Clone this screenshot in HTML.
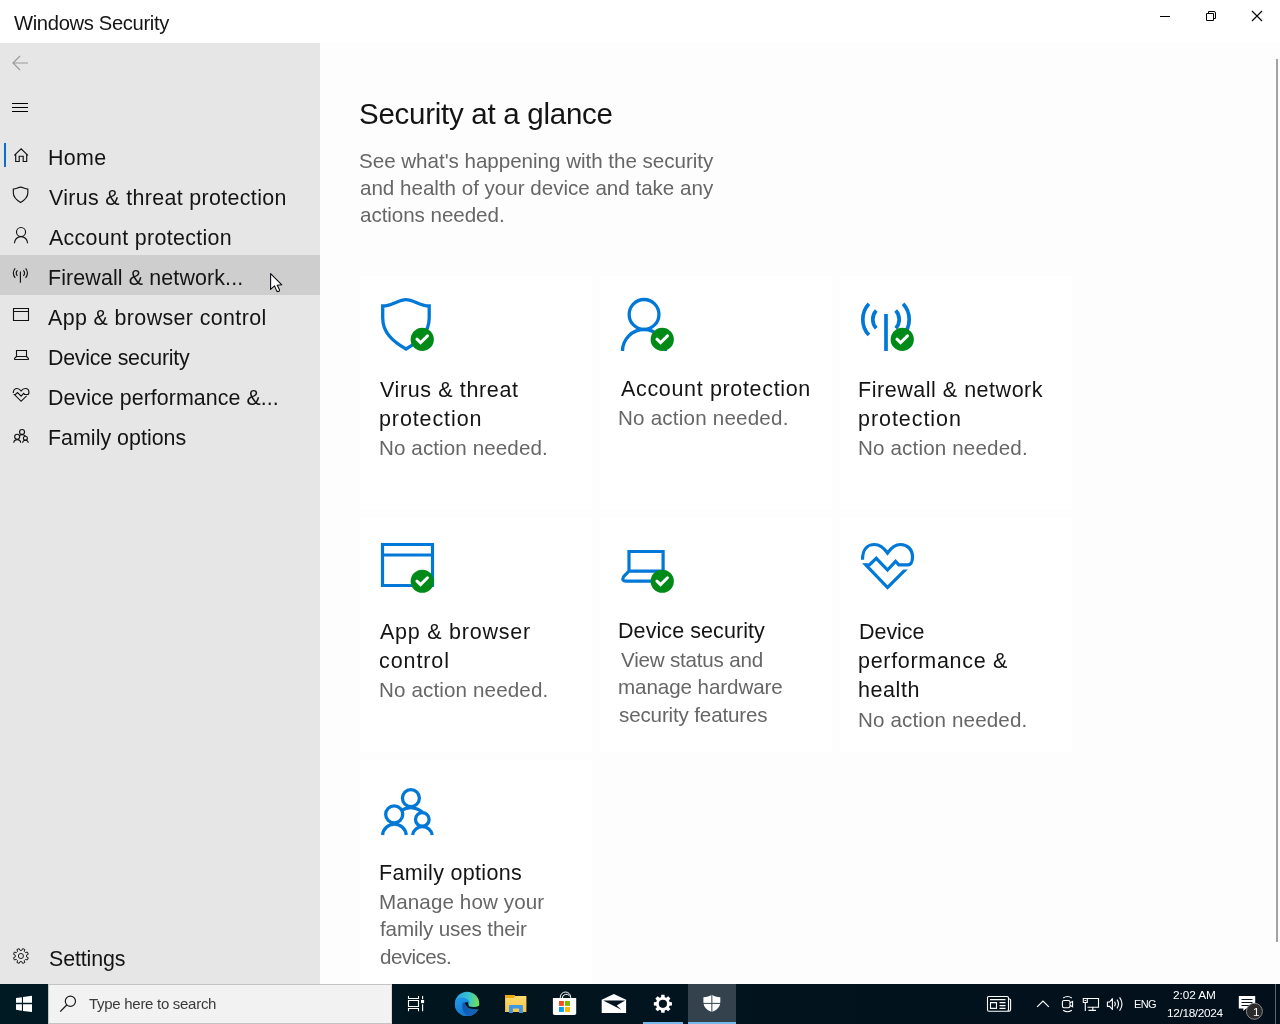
<!DOCTYPE html>
<html lang="en"><head><meta charset="utf-8"><title>Windows Security</title>
<style>
html,body{margin:0;padding:0}
body{width:1280px;height:1024px;overflow:hidden;position:relative;background:#fff;font-family:"Liberation Sans",sans-serif}
.a{position:absolute}
.grp{position:absolute;left:0;top:0;width:0;height:0;display:block}
.t{position:absolute;white-space:nowrap;display:block;will-change:transform}
svg{position:absolute;overflow:visible}
#side{left:0;top:43px;width:320px;height:941px;background:#e6e6e6}
#main{left:320px;top:43px;width:960px;height:941px;background:#fdfdfd}
.card{background:#fff;width:232px;height:234px}
#hover{left:0;top:255px;width:320px;height:40px;background:#cecece}
#sel{left:4px;top:143px;width:2px;height:24px;background:#0a6cd6}
#tb{left:0;top:984px;width:1280px;height:40px;background:#02131f;background:linear-gradient(90deg,#001a24 0,#01151f 35%,#03101c 100%)}
#search{left:48px;top:984px;width:344px;height:40px;background:#f2f2f2;box-sizing:border-box;border:1px solid #c4c4c4;border-right-color:#d6d6d6}
#active{left:688px;top:984px;width:48px;height:40px;background:#33424d}
.ul{height:2px;top:1022px;background:#76b9ed}
#scroll{left:1276px;top:59px;width:2px;height:883px;background:#a3a3a3}
</style></head>
<body>
<div class="a" id="side"></div>
<div class="a" id="main"></div>
<div class="a" id="hover"></div>
<div class="a" id="sel"></div>
<div class="a card" style="left:360px;top:276px;height:234px"></div>
<div class="a card" style="left:600px;top:276px;height:234px"></div>
<div class="a card" style="left:840px;top:276px;height:234px"></div>
<div class="a card" style="left:360px;top:518px;height:234px"></div>
<div class="a card" style="left:600px;top:518px;height:234px"></div>
<div class="a card" style="left:840px;top:518px;height:234px"></div>
<div class="a card" style="left:360px;top:760px;height:224px"></div>
<div class="a" id="scroll"></div>
<div class="a" id="tb"></div>
<div class="a" id="search"></div>
<div class="a" id="active"></div>
<div class="a ul" style="left:643px;width:40px"></div>
<div class="a ul" style="left:688px;width:48px"></div>
<svg width="1280" height="1024" viewBox="0 0 1280 1024" style="left:0;top:0"><g transform="translate(381,298) scale(1)" fill="none" color="#0078d7" stroke="#0078d7" stroke-width="3.300"><path d="M1.7,8 C12,8 17,1.6 25,1.6 C33,1.6 38,8 48.2,8 V20 C48.2,34 39,43 25,51 C11,43 1.7,34 1.7,20 Z"/></g><circle cx="422.25" cy="339.4" r="11.6" fill="#008a17"/><path d="M416.95,339.20 L420.55,342.70 L427.45,335.90" fill="none" stroke="#fff" stroke-width="3" stroke-linejoin="miter" stroke-linecap="round"/><g transform="translate(621,298) scale(1)" fill="none" color="#0078d7" stroke="#0078d7" stroke-width="3.300"><circle cx="23.05" cy="16.4" r="14.9"/><path d="M1.5,53 A21.5,21.5 0 0 1 44.5,53"/></g><circle cx="662.25" cy="339.4" r="11.6" fill="#008a17"/><path d="M656.95,339.20 L660.55,342.70 L667.45,335.90" fill="none" stroke="#fff" stroke-width="3" stroke-linejoin="miter" stroke-linecap="round"/><g transform="translate(861,302) scale(1)" fill="none" color="#0078d7" stroke="#0078d7" stroke-width="3.700"><path d="M15.27,8.48 A13.2,13.2 0 0 0 15.27,26.32"/><path d="M34.73,8.48 A13.2,13.2 0 0 1 34.73,26.32"/><path d="M7.90,1.73 A23.2,23.2 0 0 0 7.90,33.07"/><path d="M42.10,1.73 A23.2,23.2 0 0 1 42.10,33.07"/><path d="M25,11.999999999999998 V49"/></g><circle cx="902.25" cy="339.4" r="11.6" fill="#008a17"/><path d="M896.95,339.20 L900.55,342.70 L907.45,335.90" fill="none" stroke="#fff" stroke-width="3" stroke-linejoin="miter" stroke-linecap="round"/><g transform="translate(381,543) scale(1)" fill="none" color="#0078d7" stroke="#0078d7" stroke-width="3.200"><path d="M1.5,1.5 H51.5 V42.5 H1.5 Z M1.5,12 H51.5"/></g><circle cx="422.25" cy="581.25" r="11.6" fill="#008a17"/><path d="M416.95,581.05 L420.55,584.55 L427.45,577.75" fill="none" stroke="#fff" stroke-width="3" stroke-linejoin="miter" stroke-linecap="round"/><g transform="translate(621,550) scale(1)" fill="none" color="#0078d7" stroke="#0078d7" stroke-width="3.200"><path d="M8,21.2 V1.5 H42.1 V21.2 M8,21.2 H42.1 M8,21.2 L2.6,26.6 Q0.3,31.2 5,31.2 H45.1 Q49.8,31.2 47.5,26.6 L42.1,21.2"/></g><circle cx="662.25" cy="581.25" r="11.6" fill="#008a17"/><path d="M656.95,581.05 L660.55,584.55 L667.45,577.75" fill="none" stroke="#fff" stroke-width="3" stroke-linejoin="miter" stroke-linecap="round"/><g transform="translate(861,543) scale(1)" fill="none" color="#0078d7" stroke="#0078d7" stroke-width="3.200"><path d="M1.5,16.8 C1.5,6 7,1.5 13.5,1.5 C19,1.5 23,5 26.5,10 C30,5 34,1.5 39.5,1.5 C46,1.5 51.5,6 51.5,14 C51.5,18 50,21.8 47,21.8 L37.75,21.8 L34.6,18.3 L26.5,27 L15.25,15.3 L8.4,21.8 L4.5,21.8" stroke-linejoin="miter"/><path d="M1,20.2 L5.5,20.2 L26.5,42.2 L42.3,26.4 L46.8,26.4 L26.5,46.7 Z" fill="currentColor" stroke="none"/></g><g transform="translate(381,788) scale(1)" fill="none" color="#0078d7" stroke="#0078d7" stroke-width="3.300"><circle cx="29.9" cy="10.1" r="8.5"/><path d="M20.3,22.6 A17.5,17.5 0 0 1 41.6,24.2"/><circle cx="13.2" cy="26.4" r="8.5"/><path d="M1.54,47 A11.9,11.9 0 0 1 25.26,47"/><circle cx="41.3" cy="31.4" r="6.8"/><path d="M31.6,47 A9.9,9.9 0 0 1 51.2,47"/></g><path d="M14.3,155.4 L21.1,148.8 L27.9,155.4 M15.7,154.3 V161.5 H19.2 V156.2 H23.2 V161.5 H26.7 V154.3" fill="none" stroke="#111" stroke-width="1.15"/><g transform="translate(12.8,186.6) scale(0.312)" fill="none" color="#111" stroke="#111" stroke-width="3.686"><path d="M1.7,8 C12,8 17,1.6 25,1.6 C33,1.6 38,8 48.2,8 V20 C48.2,34 39,43 25,51 C11,43 1.7,34 1.7,20 Z"/></g><g transform="translate(14,227) scale(0.305)" fill="none" color="#111" stroke="#111" stroke-width="3.770"><circle cx="23.05" cy="16.4" r="14.9"/><path d="M1.5,53 A21.5,21.5 0 0 1 44.5,53"/></g><g transform="translate(12.8,267.8) scale(0.304)" fill="none" color="#111" stroke="#111" stroke-width="3.783"><path d="M15.27,8.48 A13.2,13.2 0 0 0 15.27,26.32"/><path d="M34.73,8.48 A13.2,13.2 0 0 1 34.73,26.32"/><path d="M7.90,1.73 A23.2,23.2 0 0 0 7.90,33.07"/><path d="M42.10,1.73 A23.2,23.2 0 0 1 42.10,33.07"/><path d="M25,11.999999999999998 V49"/></g><path d="M13.5,308.5 H28.5 V320.5 H13.5 Z M13.5,311.5 H28.5" fill="none" stroke="#111" stroke-width="1.1"/><path d="M16.5,356.5 V350.5 H26.5 V356.5 M16.5,356.5 H26.5 M16.5,356.5 L14.6,358.4 Q14,359.5 15.4,359.5 H27.6 Q29,359.5 28.4,358.4 L26.5,356.5" fill="none" stroke="#111" stroke-width="1.1"/><g transform="translate(12.8,388) scale(0.313,0.298)" fill="none" color="#111" stroke="#111" stroke-width="3.833"><path d="M1.5,16.8 C1.5,6 7,1.5 13.5,1.5 C19,1.5 23,5 26.5,10 C30,5 34,1.5 39.5,1.5 C46,1.5 51.5,6 51.5,14 C51.5,18 50,21.8 47,21.8 L37.75,21.8 L34.6,18.3 L26.5,27 L15.25,15.3 L8.4,21.8 L4.5,21.8" stroke-linejoin="miter"/><path d="M1,20.2 L5.5,20.2 L26.5,42.2 L42.3,26.4 L46.8,26.4 L26.5,46.7 Z" fill="currentColor" stroke="none"/></g><g transform="translate(13.3,429) scale(0.293)" fill="none" color="#111" stroke="#111" stroke-width="3.925"><circle cx="29.9" cy="10.1" r="8.5"/><path d="M20.3,22.6 A17.5,17.5 0 0 1 41.6,24.2"/><circle cx="13.2" cy="26.4" r="8.5"/><path d="M1.54,47 A11.9,11.9 0 0 1 25.26,47"/><circle cx="41.3" cy="31.4" r="6.8"/><path d="M31.6,47 A9.9,9.9 0 0 1 51.2,47"/></g><path d="M21.79,950.37 L22.67,948.61 L24.87,949.52 L24.25,951.39 L25.51,952.65 L27.38,952.03 L28.29,954.23 L26.53,955.11 L26.53,956.89 L28.29,957.77 L27.38,959.97 L25.51,959.35 L24.25,960.61 L24.87,962.48 L22.67,963.39 L21.79,961.63 L20.01,961.63 L19.13,963.39 L16.93,962.48 L17.55,960.61 L16.29,959.35 L14.42,959.97 L13.51,957.77 L15.27,956.89 L15.27,955.11 L13.51,954.23 L14.42,952.03 L16.29,952.65 L17.55,951.39 L16.93,949.52 L19.13,948.61 L20.01,950.37 Z" fill="none" stroke="#111" stroke-width="0.95" stroke-linejoin="round"/><circle cx="20.9" cy="956" r="2.55" fill="none" stroke="#111" stroke-width="0.95"/><path d="M28,63 H13 M20,56 L13,63 L20,70" fill="none" stroke="#9a9a9a" stroke-width="1.2"/><path d="M12,103.5 H28 M12,107.5 H28 M12,111.5 H28" stroke="#000" stroke-width="1"/><path d="M1160,16.5 H1170" stroke="#000" stroke-width="1"/><path d="M1206.5,13.5 H1213.5 V20.5 H1206.5 Z M1208.5,13.5 V11.5 H1214 Q1215.5,11.5 1215.5,13 V18.5 H1213.5" fill="none" stroke="#000" stroke-width="1"/><path d="M1252,11 L1262,21 M1262,11 L1252,21" stroke="#000" stroke-width="1.1"/><path d="M270.6,273.6 V289.4 L274.5,285.9 L276.7,290.9 Q277.6,292 278.9,291.3 Q279.9,290.6 279.4,289.5 L277.2,285.2 L281.8,284.8 Z" fill="#fff" stroke="#0a0a14" stroke-width="1.1" stroke-linejoin="round"/><path d="M16,998 L21.9,997.15 V1002.8 H16 Z M23,997 L32,995.7 V1002.8 H23 Z M16,1004.2 H21.9 V1010.7 L16,1009.85 Z M23,1004.2 H32 V1012.1 L23,1010.9 Z" fill="#fff"/><circle cx="70.4" cy="1001.3" r="5.1" fill="none" stroke="#1c1c1c" stroke-width="1.2"/><path d="M66.7,1005 L60.2,1011.6" stroke="#1c1c1c" stroke-width="1.3"/><path d="M408.5,1000.5 H418.5 V1006.5 H408.5 Z M408.5,996 V998.5 H418.5 V996 M408.5,1011.2 V1008.5 H418.5 V1011.2 M422.6,996 V999.2 M422.6,1004.2 V1011.2" fill="none" stroke="#fff" stroke-width="1.1"/><rect x="421" y="1000" width="3.1" height="3.1" fill="#fff"/><defs>
<linearGradient id="eg1" x1="0.1" y1="0.3" x2="1" y2="0.45"><stop offset="0" stop-color="#2aa9e6"/><stop offset="0.5" stop-color="#38c6c8"/><stop offset="1" stop-color="#74e150"/></linearGradient>
<linearGradient id="eg2" x1="0" y1="0" x2="0.6" y2="1"><stop offset="0" stop-color="#1f9be8"/><stop offset="1" stop-color="#1272cf"/></linearGradient>
<linearGradient id="eg3" x1="0" y1="0" x2="1" y2="1"><stop offset="0" stop-color="#0f57ad"/><stop offset="1" stop-color="#1566bf"/></linearGradient>
<linearGradient id="fg" x1="0" y1="0" x2="0" y2="1"><stop offset="0" stop-color="#ffdb6e"/><stop offset="1" stop-color="#f7c64a"/></linearGradient>
</defs><circle cx="467.1" cy="1003.9" r="12.2" fill="url(#eg1)"/><path d="M455,1003 C455.5,1000 457.5,997.8 460.5,997.6 C464.5,997.4 468.5,998.8 470,1002.8 C468,1001.6 465.5,1002.4 465.2,1004.8 C465,1009 470,1012.2 477.6,1009.8 C475,1013.6 471.5,1016.1 467.1,1016.1 C460.4,1016.1 454.9,1010.6 454.9,1003.9 Z" fill="url(#eg2)"/><path d="M462.6,1003.5 C461.5,1008.5 463.5,1014.5 469,1015.9 C473,1015.5 476.5,1013 478,1009.2 L471,1008.8 C467.1,1008.2 464.75,1005.1 465.1,1002.4 C464,1002.2 463,1002.6 462.6,1003.5 Z" fill="url(#eg3)"/><path d="M465.1,1002.4 C464.75,1005.1 467.1,1008.2 471,1008.8 L478.4,1009.5 L479.6,1007.6 L479.4,1005.4 C476,1007.4 472,1007.6 469,1006.3 C468.3,1004.7 469,1002.75 467.5,1002 Z" fill="#04182a"/><path d="M505.1,995.4 Q505.1,994.9 505.6,994.9 H514 L515.3,996.1 H526 Q526.4,996.1 526.4,996.5 V1012 H505.1 Z" fill="url(#fg)"/><path d="M505.1,995.4 Q505.1,994.9 505.6,994.9 H514 L515.2,996.1 L513.6,998 H505.1 Z" fill="#e9a90f"/><path d="M509,1005.9 Q509,1004.9 510,1004.9 H521.9 Q522.9,1004.9 522.9,1005.9 V1012.9 H519 V1008.4 H512.9 V1012.9 H509 Z" fill="#3f98e3"/><path d="M552.9,998 H576.2 V1013.3 Q576.2,1015.1 574.4,1015.1 H554.7 Q552.9,1015.1 552.9,1013.3 Z" fill="#fff"/><path d="M560.3,998 V997.2 A5.2,5.2 0 0 1 570.7,997.2 V998 M562.3,998 A4,4 0 0 1 569.6,996" fill="none" stroke="#fff" stroke-width="1"/><rect x="559" y="1001" width="4.9" height="4.9" fill="#f25022"/><rect x="565" y="1001" width="5" height="4.9" fill="#7fba00"/><rect x="559" y="1007" width="4.9" height="4.9" fill="#00a4ef"/><rect x="565" y="1007" width="5" height="4.9" fill="#ffb900"/><path d="M601.7,999.8 L613.9,994 L626.1,999.8 V1012.9 H601.7 Z" fill="#fff"/><path d="M603.2,1000.5 L625.2,1000.5 L616.7,1005.4 L621.4,1009.7 Z" fill="#03131f"/><path d="M661.05,997.15 L661.25,994.75 L664.55,994.75 L664.75,997.15 L666.30,997.79 L668.13,996.23 L670.47,998.57 L668.91,1000.40 L669.55,1001.95 L671.95,1002.15 L671.95,1005.45 L669.55,1005.65 L668.91,1007.20 L670.47,1009.03 L668.13,1011.37 L666.30,1009.81 L664.75,1010.45 L664.55,1012.85 L661.25,1012.85 L661.05,1010.45 L659.50,1009.81 L657.67,1011.37 L655.33,1009.03 L656.89,1007.20 L656.25,1005.65 L653.85,1005.45 L653.85,1002.15 L656.25,1001.95 L656.89,1000.40 L655.33,998.57 L657.67,996.23 L659.50,997.79 Z M667.00,1003.80 A4.1,4.1 0 1 0 658.80,1003.80 A4.1,4.1 0 1 0 667.00,1003.80 Z" fill="#fff" fill-rule="evenodd"/><path d="M703.4,997.2 C707,997.2 709.5,996.2 711.85,994.8 C714.2,996.2 716.7,997.2 720.3,997.2 V1002 C720.3,1007 716.5,1010.3 711.85,1012.1 C707.2,1010.3 703.4,1007 703.4,1002 Z" fill="#fff"/><path d="M711.85,994 V1013 M703,1003.4 H721" stroke="#33424d" stroke-width="1"/><path d="M988.5,996.5 H1007 Q1008.5,996.5 1008.5,998 V1009.7 Q1008.5,1011.2 1007,1011.2 H989 Q987.5,1011.2 987.5,1009.7 V997.5 Q987.5,996.5 988.5,996.5 Z M1008.5,999 H1009.6 Q1010.6,999 1010.6,1000 V1009.5 Q1010.6,1011.2 1009,1011.2 H1007 M990,999.6 H1005.5 M999.5,1002.6 H1005.5 M999.5,1005.6 H1005.5 M999.5,1008.4 H1005.5 M990.5,1002.6 H996.5 V1008.4 H990.5 Z" fill="none" stroke="#fff" stroke-width="1.1"/><path d="M1037.2,1006.8 L1043,1001 L1048.8,1006.8" fill="none" stroke="#fff" stroke-width="1.2"/><path d="M1064,1000.5 H1068.3 Q1070,1000.5 1070,1002.2 V1006 Q1070,1007.7 1068.3,1007.7 H1064 Q1062.4,1007.7 1062.4,1006 V1002.2 Q1062.4,1000.5 1064,1000.5 Z M1070,1003 L1072.6,1001.4 V1006.8 L1070,1005.2 M1063.2,998 Q1067.5,995 1071.8,998 M1063.2,1010.2 Q1067.5,1013.2 1071.8,1010.2" fill="none" stroke="#fff" stroke-width="1.1"/><path d="M1087.5,998.5 H1098.5 V1007.3 H1087.5 M1092.8,1007.3 V1010.4 M1088.5,1010.4 H1096 M1083.3,998.5 H1087.3 V1002.5 H1083.3 Z M1085.3,1002.5 V1011 M1084.5,1000.5 H1086.2" fill="none" stroke="#fff" stroke-width="1.1"/><path d="M1107.4,1002 H1109.6 L1112.4,998.6 V1009.4 L1109.6,1006.4 H1107.4 Z" fill="none" stroke="#fff" stroke-width="1.1" stroke-linejoin="round"/><path d="M1114.6,1001.6 Q1116.2,1004 1114.6,1006.4 M1117,999.6 Q1120,1004 1117,1008.4 M1119.6,997.4 Q1124.4,1004 1119.6,1010.8" fill="none" stroke="#fff" stroke-width="1.1"/><path d="M1238.8,996 H1255.2 V1008.4 H1246 L1243.4,1011 V1008.4 H1238.8 Z" fill="#fff"/><path d="M1241.5,999.5 H1252.5 M1241.5,1002.5 H1252.5 M1241.5,1005.5 H1249" stroke="#03131f" stroke-width="1"/><circle cx="1254.4" cy="1011.3" r="8" fill="#2b2b2b" stroke="#8a8a8a" stroke-width="1"/><path d="M1275.5,984 V1024" stroke="#5c6770" stroke-width="1"/></svg>
<header class="grp">
<span class="t" style="left:14.40px;top:13px;font-size:20.2px;line-height:20.2px;letter-spacing:-0.342px;color:#141414">Windows Security</span>
</header>
<nav class="grp">
<span class="t" style="left:48.25px;top:148px;font-size:21.4px;line-height:21.4px;letter-spacing:0.362px;color:#141414">Home</span>
<span class="t" style="left:49.00px;top:188px;font-size:21.4px;line-height:21.4px;letter-spacing:0.346px;color:#141414">Virus &amp; threat protection</span>
<span class="t" style="left:48.75px;top:228px;font-size:21.4px;line-height:21.4px;letter-spacing:0.322px;color:#141414">Account protection</span>
<span class="t" style="left:48.00px;top:268px;font-size:21.4px;line-height:21.4px;letter-spacing:0.131px;color:#141414">Firewall &amp; network...</span>
<span class="t" style="left:48.25px;top:308px;font-size:21.4px;line-height:21.4px;letter-spacing:0.391px;color:#141414">App &amp; browser control</span>
<span class="t" style="left:48.00px;top:348px;font-size:21.4px;line-height:21.4px;letter-spacing:-0.238px;color:#141414">Device security</span>
<span class="t" style="left:48.00px;top:388px;font-size:21.4px;line-height:21.4px;letter-spacing:0.057px;color:#141414">Device performance &amp;...</span>
<span class="t" style="left:48.00px;top:428px;font-size:21.4px;line-height:21.4px;letter-spacing:0.023px;color:#141414">Family options</span>
<span class="t" style="left:48.75px;top:949px;font-size:21.4px;line-height:21.4px;letter-spacing:-0.135px;color:#141414">Settings</span>
</nav>
<main class="grp">
<span class="t" style="left:358.50px;top:99px;font-size:29.5px;line-height:29.5px;letter-spacing:-0.273px;color:#141414">Security at a glance</span>
<span class="t" style="left:359.00px;top:151px;font-size:20.6px;line-height:20.6px;letter-spacing:-0.029px;color:#666">See what&#x27;s happening with the security</span>
<span class="t" style="left:359.50px;top:178px;font-size:20.6px;line-height:20.6px;letter-spacing:-0.016px;color:#666">and health of your device and take any</span>
<span class="t" style="left:359.50px;top:205px;font-size:20.6px;line-height:20.6px;letter-spacing:-0.057px;color:#666">actions needed.</span>
<span class="t" style="left:380.00px;top:380px;font-size:21.5px;line-height:21.5px;letter-spacing:0.624px;color:#141414">Virus &amp; threat</span>
<span class="t" style="left:378.50px;top:409px;font-size:21.5px;line-height:21.5px;letter-spacing:0.893px;color:#141414">protection</span>
<span class="t" style="left:378.50px;top:438px;font-size:20.6px;line-height:20.6px;letter-spacing:0.097px;color:#666">No action needed.</span>
<span class="t" style="left:620.60px;top:379px;font-size:21.5px;line-height:21.5px;letter-spacing:0.658px;color:#141414">Account protection</span>
<span class="t" style="left:617.75px;top:408px;font-size:20.6px;line-height:20.6px;letter-spacing:0.201px;color:#666">No action needed.</span>
<span class="t" style="left:857.70px;top:380px;font-size:21.5px;line-height:21.5px;letter-spacing:0.525px;color:#141414">Firewall &amp; network</span>
<span class="t" style="left:858.00px;top:409px;font-size:21.5px;line-height:21.5px;letter-spacing:0.949px;color:#141414">protection</span>
<span class="t" style="left:857.70px;top:438px;font-size:20.6px;line-height:20.6px;letter-spacing:0.154px;color:#666">No action needed.</span>
<span class="t" style="left:379.90px;top:622px;font-size:21.5px;line-height:21.5px;letter-spacing:0.762px;color:#141414">App &amp; browser</span>
<span class="t" style="left:379.30px;top:651px;font-size:21.5px;line-height:21.5px;letter-spacing:0.908px;color:#141414">control</span>
<span class="t" style="left:378.50px;top:680px;font-size:20.6px;line-height:20.6px;letter-spacing:0.129px;color:#666">No action needed.</span>
<span class="t" style="left:617.90px;top:621px;font-size:21.5px;line-height:21.5px;letter-spacing:0.077px;color:#141414">Device security</span>
<span class="t" style="left:620.60px;top:650px;font-size:20.6px;line-height:20.6px;letter-spacing:-0.204px;color:#666">View status and</span>
<span class="t" style="left:618.30px;top:677px;font-size:20.6px;line-height:20.6px;letter-spacing:-0.089px;color:#666">manage hardware</span>
<span class="t" style="left:619.30px;top:705px;font-size:20.6px;line-height:20.6px;letter-spacing:-0.155px;color:#666">security features</span>
<span class="t" style="left:858.50px;top:622px;font-size:21.5px;line-height:21.5px;letter-spacing:-0.052px;color:#141414">Device</span>
<span class="t" style="left:858.00px;top:651px;font-size:21.5px;line-height:21.5px;letter-spacing:0.694px;color:#141414">performance &amp;</span>
<span class="t" style="left:858.30px;top:680px;font-size:21.5px;line-height:21.5px;letter-spacing:0.566px;color:#141414">health</span>
<span class="t" style="left:858.00px;top:710px;font-size:20.6px;line-height:20.6px;letter-spacing:0.129px;color:#666">No action needed.</span>
<span class="t" style="left:378.50px;top:863px;font-size:21.5px;line-height:21.5px;letter-spacing:0.319px;color:#141414">Family options</span>
<span class="t" style="left:378.50px;top:892px;font-size:20.6px;line-height:20.6px;letter-spacing:0.100px;color:#666">Manage how your</span>
<span class="t" style="left:380.00px;top:919px;font-size:20.6px;line-height:20.6px;letter-spacing:-0.120px;color:#666">family uses their</span>
<span class="t" style="left:380.00px;top:947px;font-size:20.6px;line-height:20.6px;letter-spacing:-0.547px;color:#666">devices.</span>
</main>
<footer class="grp">
<span class="t" style="left:88.50px;top:996px;font-size:15px;line-height:15px;letter-spacing:-0.285px;color:#3a3a3a">Type here to search</span>
<span class="t" style="left:1133.50px;top:999px;font-size:11px;line-height:11px;letter-spacing:-0.590px;color:#fff">ENG</span>
<span class="t" style="left:1173.00px;top:990px;font-size:11.8px;line-height:11.8px;letter-spacing:-0.084px;color:#fff">2:02 AM</span>
<span class="t" style="left:1167.25px;top:1008px;font-size:11.8px;line-height:11.8px;letter-spacing:-0.331px;color:#fff">12/18/2024</span>
<span class="t" style="left:1252.60px;top:1007px;font-size:11.8px;line-height:11.8px;letter-spacing:0.000px;color:#fff">1</span>
</footer>
</body></html>
